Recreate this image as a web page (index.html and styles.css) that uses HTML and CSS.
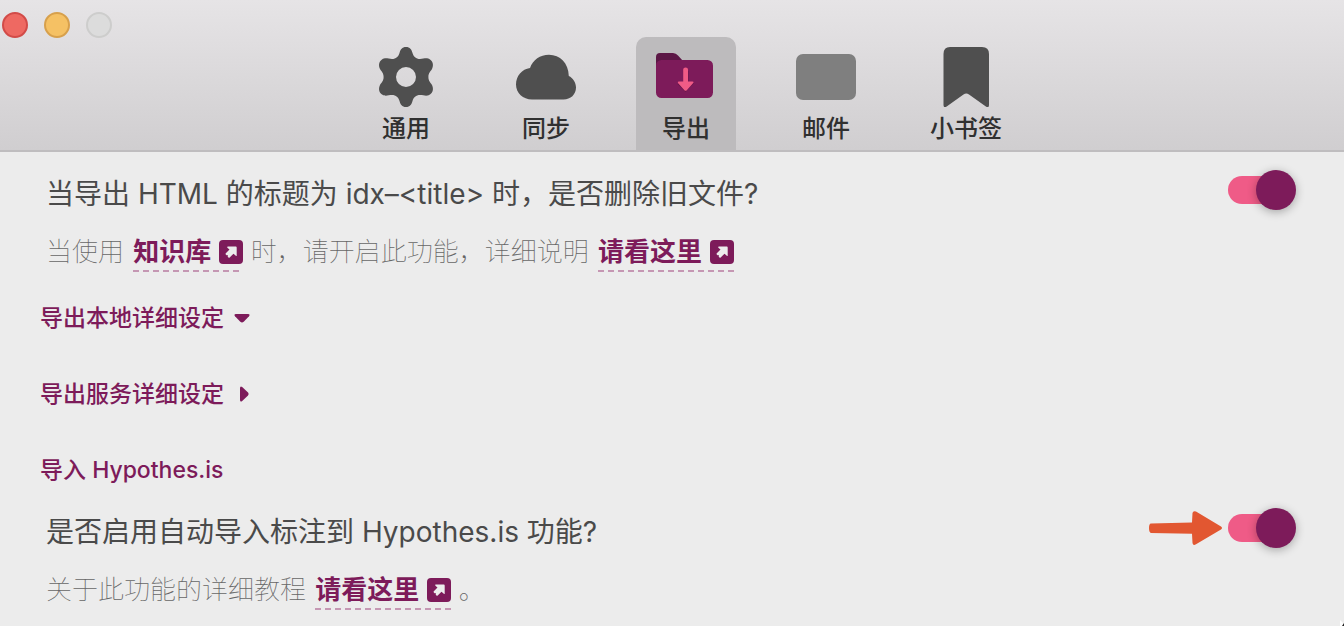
FILE: index.html
```html
<!DOCTYPE html>
<html lang="zh-CN">
<head>
<meta charset="utf-8">
<title>导出</title>
<link rel="stylesheet" href="styles.css">
</head>
<body>
<svg class="symbols" aria-hidden="true">
  <symbol id="external" viewBox="0 0 24 24">
    <rect width="24" height="24" rx="4" fill="#7d1b5a"/>
    <path d="M8.800 6.500h8q.9 0 .9.900v8q0 1.200-.9.400L14.500 13.700l-3.800 3.800q-.6.500-1.200 0l-.8-.8.300-1.500-1.400.1-.8-.8q-.5-.6 0-1.200l3.700-3.700L8.400 7.700Q7.700 6.500 8.800 6.500z" fill="#ececec"/>
  </symbol>
</svg>
<header class="toolbar">
  <div class="lights">
    <button class="light close" aria-label="关闭"></button>
    <button class="light minimize" aria-label="最小化"></button>
    <button class="light zoom" aria-label="缩放" disabled></button>
  </div>
  <nav class="tabs">
    <button class="tab">
      <svg class="tab-icon" viewBox="0 0 60 60"><path fill="#4f4f4f" fill-rule="evenodd" d="M30 0C34 0 35.500 2.500 36.500 6C37.500 9.500 40 12 44 12C48 12 50.500 10.300 54 12.500C57.500 15 57.500 19 56 22C54.500 24.500 52.400 26 52.400 30S54.500 35.500 56 38C57.500 41 57.500 45 54 47.500C50.500 49.700 48 48 44 48C40 48 37.500 50.500 36.500 54C35.500 57.500 34 60 30 60S24.500 57.500 23.500 54C22.500 50.500 20 48 16 48C12 48 9.500 49.700 6 47.500C2.500 45 2.500 41 4 38C5.500 35.500 7.600 34 7.600 30S5.500 24.500 4 22C2.500 19 2.500 15 6 12.500C9.500 10.300 12 12 16 12C20 12 22.500 9.500 23.500 6C24.500 2.500 26 0 30 0ZM30 20a10 10 0 1 0 0 20a10 10 0 1 0 0-20Z"/></svg>
      <span class="tab-label">通用</span>
    </button>
    <button class="tab">
      <svg class="tab-icon" viewBox="0 0 60 60"><path fill="#4f4f4f" d="M16 52.500C7 52.500 0 46 0 37.500C0 29 6 22 14 21C17 13 24 7.800 33 7.800C44 7.800 52.500 16 52.800 29C57 31 60 35.500 60 40.500C60 47.500 54.500 52.500 47.500 52.500Z"/></svg>
      <span class="tab-label">同步</span>
    </button>
    <button class="tab active" aria-current="page">
      <svg class="tab-icon" viewBox="0 0 60 60"><path fill="#5c1746" d="M0 18V10Q0 6 4 6H17Q20 6 22 8.500L27 14V22H0Z"/><rect y="13" width="57" height="38" rx="5.500" fill="#7d1b5a"/><path fill="#521039" opacity=".5" d="M27.500 24h5v12h5.500l-8.500 9l-8-8h6z"/><path fill="#f05b86" d="M27.200 22.500Q27.200 20.500 29.600 20.500T32 22.500V34.500H36.500Q38.300 34.600 37 36.200L30.800 43.200Q29.600 44.500 28.400 43.200L22.200 36.200Q21 34.600 22.700 34.500H27.200Z"/></svg>
      <span class="tab-label">导出</span>
    </button>
    <button class="tab">
      <svg class="tab-icon" viewBox="0 0 60 60"><rect y="7" width="60" height="46" rx="7" fill="#7f7f7f"/></svg>
      <span class="tab-label">邮件</span>
    </button>
    <button class="tab">
      <svg class="tab-icon" viewBox="0 0 60 60"><path fill="#4f4f4f" d="M14 0H46Q53 0 53 7V58Q53 61.500 49.500 59.300L33 47.500Q30.300 45.500 27.500 47.500L11 59.300Q7.500 61.500 7.500 58V7Q7.500 0 14 0Z"/></svg>
      <span class="tab-label">小书签</span>
    </button>
  </nav>
</header>
<main class="settings">
  <section class="setting">
    <div class="row">
      <label class="title" for="delete-old">当导出 HTML 的标题为 idx–&lt;title&gt; 时，是否删除旧文件?</label>
      <input class="switch" type="checkbox" id="delete-old" checked>
    </div>
    <p class="note">当使用 <a class="link" href="#kb">知识库<svg class="link-icon"><use href="#external"/></svg></a> 时，请开启此功能，详细说明 <a class="link" href="#help">请看这里<svg class="link-icon"><use href="#external"/></svg></a></p>
  </section>
  <button class="group" aria-expanded="true">导出本地详细设定<svg class="caret" viewBox="0 0 16 16"><path d="M2 4H14Q16.500 4.200 15 6.200L9.700 11.800Q8 13.400 6.300 11.800L1 6.200Q-.5 4.200 2 4Z" fill="#7d1b5a"/></svg></button>
  <button class="group" aria-expanded="false">导出服务详细设定<svg class="caret" viewBox="0 0 16 16"><path d="M6 2V14Q6.200 16.500 8.200 15L13.800 9.700Q15.400 8 13.800 6.300L8.200 1Q6.200-.5 6 2Z" fill="#7d1b5a"/></svg></button>
  <h2 class="group">导入 Hypothes.is</h2>
  <section class="setting">
    <div class="row">
      <label class="title" for="auto-import">是否启用自动导入标注到 Hypothes.is 功能?</label>
      <svg class="pointer" viewBox="0 0 74 34"><path fill="#e25731" d="M2 12.500L43 11.500L43.500 2Q44-.5 47 .5L72 15.500Q74 17 72 18.500L47 33.300Q44 35 43.500 32L43 22.800L2 22Q0 21.500 0 17T2 12.500Z"/></svg>
      <input class="switch" type="checkbox" id="auto-import" checked>
    </div>
    <p class="note">关于此功能的详细教程 <a class="link" href="#tutorial">请看这里<svg class="link-icon"><use href="#external"/></svg></a> 。</p>
  </section>
</main>
<svg class="resize" viewBox="0 0 4 6" aria-hidden="true"><path d="M0 0L4 4V6H0Z" fill="#fff"/><path d="M2 6L4 3V6Z" fill="#222"/></svg>
</body>
</html>
```
FILE: styles.css
```css
* {
  box-sizing: border-box;
}

body {
  margin: 0;
  min-height: 100vh;
  position: relative;
  overflow: hidden;
  background: #ececec;
  color: #4a4a4a;
  font-family: Inter, "Noto Sans CJK SC", sans-serif;
}

button {
  border: 0;
  padding: 0;
  background: none;
  font-family: inherit;
}

.symbols {
  position: absolute;
  width: 0;
  height: 0;
}

.toolbar {
  display: flex;
  align-items: flex-start;
  padding-right: 82px;
  border-bottom: 2px solid #bfbdbf;
  background: linear-gradient(#e6e4e6, #d0ced0);
}

.lights {
  display: flex;
  flex: none;
  width: 110px;
  gap: 16px;
  padding: 12px 0 0 2px;
}

.light {
  flex: none;
  width: 26px;
  height: 26px;
  border: 2px solid;
  border-radius: 50%;
}

.close {
  background: #ee6962;
  border-color: #d24b48;
}

.minimize {
  background: #f5c164;
  border-color: #d7a04c;
}

.zoom {
  background: #dcdcdc;
  border-color: #cdcdcc;
}

.tabs {
  display: flex;
  flex: 1;
  justify-content: center;
  gap: 40px;
  padding-top: 37px;
}

.tab {
  display: flex;
  flex-direction: column;
  align-items: center;
  width: 100px;
  padding-top: 10px;
  border-radius: 10px 10px 0 0;
}

.active {
  background: #bdbbbd;
}

.tab-icon {
  width: 60px;
  height: 60px;
}

.tab-label {
  color: #303030;
  font-size: 24px;
  font-weight: 500;
  line-height: 43px;
}

.settings {
  display: flex;
  flex-direction: column;
  align-items: flex-start;
  gap: 36px;
  padding: 18px 48px 12px 40px;
}

.setting {
  display: flex;
  flex-direction: column;
  align-self: stretch;
  gap: 18px;
  padding-left: 6px;
}

.setting + .group {
  margin-top: -10px;
}

.group + .setting {
  margin-top: -18px;
}

.row {
  display: flex;
  align-items: flex-start;
  gap: 5px;
}

.title {
  flex: 1;
  padding-top: 4px;
  font-size: 28px;
  line-height: 40px;
}

.note {
  margin: 0;
  color: #666;
  font-size: 26px;
  font-weight: 100;
  line-height: 40px;
}

.link {
  display: inline-flex;
  align-items: center;
  gap: 8px;
  margin-left: 2px;
  color: #7d1b5a;
  font-weight: 700;
  text-decoration: none;
  background: repeating-linear-gradient(90deg, #c597b3 0 6px, transparent 6px 10px) bottom / 100% 2px no-repeat;
}

.link-icon {
  width: 24px;
  height: 24px;
}

.group {
  display: flex;
  align-items: center;
  gap: 10px;
  margin: 0;
  color: #7d1b5a;
  font-size: 23px;
  font-weight: 500;
  line-height: 40px;
}

.caret {
  width: 16px;
  height: 16px;
}

.pointer {
  width: 74px;
  height: 34px;
  margin-top: 3px;
}

.switch {
  appearance: none;
  display: flex;
  flex: none;
  align-items: center;
  justify-content: flex-end;
  width: 68px;
  height: 40px;
  margin: 0;
}

.switch::before {
  content: "";
  flex: none;
  width: 48px;
  height: 28px;
  margin-right: -20px;
  border-radius: 14px 0 0 14px;
  background: #ef5b87;
}

.switch::after {
  content: "";
  flex: none;
  width: 40px;
  height: 40px;
  border-radius: 50%;
  background: #7d1b5a;
  box-shadow: 0 2px 10px rgba(0, 0, 0, 0.3);
}

.resize {
  position: absolute;
  right: 0;
  bottom: 0;
  width: 4px;
  height: 6px;
}
```
